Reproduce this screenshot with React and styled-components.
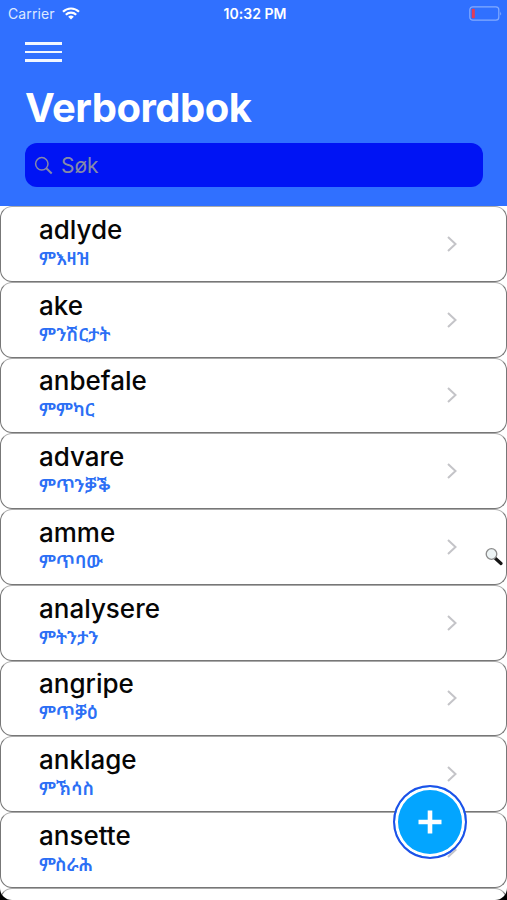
import React from "react";
import styled, { createGlobalStyle } from "styled-components";

const GlobalStyle = createGlobalStyle`
  * {
    box-sizing: border-box;
  }
  body {
    margin: 0;
    background: #000;
    font-family: Inter, "Liberation Sans", sans-serif;
    overflow: hidden;
  }
`;

const Screen = styled.div`
  position: relative;
  width: 507px;
  height: 900px;
  overflow: hidden;
  background: #fff;
  border-radius: 0 0 12px 12px;
`;

const Header = styled.header`
  height: 206px;
  background: #3070ff;
  color: #fff;
`;

const StatusBar = styled.div`
  display: grid;
  grid-template-columns: 1fr auto 1fr;
  align-items: center;
  height: 27px;
  padding: 0 5px 0 8px;
`;

const Carrier = styled.div`
  display: flex;
  align-items: center;
  gap: 7px;
  font-size: 14px;
  letter-spacing: 0.1px;
  color: #dce8ff;
`;

const Clock = styled.div`
  font-size: 14px;
  font-weight: 600;
  letter-spacing: 0.05px;
`;

const BatteryIcon = styled.svg`
  justify-self: end;
`;

const HeaderContent = styled.div`
  display: flex;
  flex-direction: column;
  align-items: flex-start;
  padding: 15px 25px 0;
`;

const MenuButton = styled.button`
  display: flex;
  flex-direction: column;
  gap: 6px;
  padding: 0;
  border: 0;
  background: none;
`;

const MenuLine = styled.span`
  width: 37px;
  height: 2.7px;
  background: #f2f7ff;
`;

const Title = styled.h1`
  margin: 22px 0 0;
  font-size: 40px;
  line-height: 48px;
  font-weight: 700;
  letter-spacing: -0.5px;
`;

const SearchField = styled.div`
  display: flex;
  align-items: center;
  gap: 8px;
  width: 457.5px;
  height: 44px;
  margin-top: 11px;
  padding: 0 9px;
  border-radius: 12px;
  background: #0014f4;
  color: #858aa8;
  font-size: 21px;
`;

const List = styled.ul`
  margin: 0;
  padding: 0;
  list-style: none;
`;

const Row = styled.li`
  display: flex;
  align-items: center;
  justify-content: space-between;
  height: 75.75px;
  padding: 0 48px 0 38px;
  border: 1px solid #777;
  border-top-color: #aaa;
  border-radius: 12px;
`;

const Words = styled.div`
  display: flex;
  flex-direction: column;
  height: 62px;
`;

const Verb = styled.span`
  font-size: 26px;
  line-height: 34px;
  font-weight: 500;
  letter-spacing: ${(props) => props.$spacing || 0}px;
  color: #060606;
`;

const Translation = styled.span`
  font-family: "Noto Sans Ethiopic", Inter, sans-serif;
  font-size: 18px;
  line-height: 22px;
  font-weight: 600;
  white-space: nowrap;
  color: #2c6ff5;
`;

const AddButton = styled.button`
  position: absolute;
  left: 393px;
  top: 785px;
  display: flex;
  align-items: center;
  justify-content: center;
  width: 74px;
  height: 74px;
  padding: 0;
  border: 2.5px solid #1e50e8;
  border-radius: 50%;
  background: #03a5ff;
  box-shadow: inset 0 0 0 3px #fff;
`;

const Magnifier = styled.svg`
  position: absolute;
  left: 485px;
  top: 547px;
`;

const verbs = [
  { verb: "adlyde", translation: "ምእዛዝ" },
  { verb: "ake", translation: "ምንሽርታት" },
  { verb: "anbefale", translation: "ምምካር" },
  { verb: "advare", translation: "ምጥንቓቕ" },
  { verb: "amme", translation: "ምጥባው" },
  { verb: "analysere", translation: "ምትንታን" },
  { verb: "angripe", translation: "ምጥቓዕ" },
  { verb: "anklage", translation: "ምኽሳስ" },
  { verb: "ansette", translation: "ምስራሕ" },
];

const WifiIcon = () => (
  <svg width="18" height="13" viewBox="0 0 18 13" fill="none" stroke="#fff" strokeWidth="2.2">
    <path d="M1 4.8C5.5.4 12.500.4 17 4.800" />
    <path d="M3.800 7.700C6.800 4.900 11.200 4.900 14.200 7.700" />
    <path d="M9 12.500 6.200 9.700Q9 7.500 11.800 9.700Z" fill="#fff" stroke="none" />
  </svg>
);

const SearchIcon = () => (
  <svg width="19" height="19" viewBox="0 0 19 19" fill="none" stroke="currentColor" strokeWidth="1.5">
    <circle cx="7.800" cy="7.800" r="6.200" />
    <path d="m12.300 12.300 5.400 5.200" strokeWidth="2" />
  </svg>
);

const Chevron = () => (
  <svg width="12" height="16" viewBox="0 0 12 16" fill="none" stroke="#c4c4c8" strokeWidth="2">
    <path d="m2 1 7.500 7L2 15" />
  </svg>
);

const App = () => {
  return (
    <Screen>
      <GlobalStyle />
      <Header>
        <StatusBar>
          <Carrier>
            Carrier
            <WifiIcon />
          </Carrier>
          <Clock>10:32 PM</Clock>
          <BatteryIcon width="33" height="15" viewBox="0 0 33 15" fill="none">
            <rect x="0.800" y="0.800" width="29" height="13.400" rx="3" stroke="#83abff" strokeWidth="1.200" />
            <rect x="2.800" y="2.800" width="3" height="9.400" rx="0.800" fill="#e43b55" />
            <path d="M31.200 5.500q1.800 2 0 4z" fill="#83abff" />
          </BatteryIcon>
        </StatusBar>
        <HeaderContent>
          <MenuButton aria-label="Meny">
            <MenuLine />
            <MenuLine />
            <MenuLine />
          </MenuButton>
          <Title>Verbordbok</Title>
          <SearchField>
            <SearchIcon />
            Søk
          </SearchField>
        </HeaderContent>
      </Header>

      <List>
        {verbs.map((item) => (
          <Row key={item.verb}>
            <Words>
              <Verb $spacing={item.spacing}>{item.verb}</Verb>
              <Translation>{item.translation}</Translation>
            </Words>
            <Chevron />
          </Row>
        ))}
        <Row />
      </List>

      <Magnifier width="18" height="19" viewBox="0 0 18 19" fill="none">
        <path d="m10.500 11.500 5.500 5" stroke="#151515" strokeWidth="3.200" strokeLinecap="round" />
        <circle cx="6.500" cy="7" r="5.300" fill="#edf4f5" stroke="#8b8b8b" strokeWidth="1.300" />
      </Magnifier>

      <AddButton aria-label="Legg til">
        <svg width="24" height="24" viewBox="0 0 24 24" stroke="#fff" strokeWidth="4.600">
          <path d="M12 .5v23M.5 12h23" />
        </svg>
      </AddButton>
    </Screen>
  );
};

export default App;
